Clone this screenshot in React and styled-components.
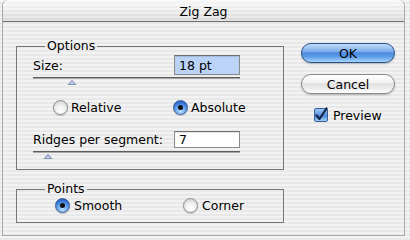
import React from "react";
import styled, { createGlobalStyle } from "styled-components";

const GlobalStyle = createGlobalStyle`
  html, body {
    margin: 0;
    padding: 0;
    background: repeating-linear-gradient(to bottom, #f3f3f3 0 2px, #e9e9e9 2px 4px);
  }
  body {
    font-family: "DejaVu Sans", "Liberation Sans", sans-serif;
    font-size: 12.5px;
    color: #000;
  }
`;

const stripes = "repeating-linear-gradient(to bottom, #f2f2f2 0 2px, #e8e8e8 2px 4px)";

const Window = styled.div`
  box-sizing: border-box;
  width: 403px;
  height: 236px;
  margin-left: 2px;
  border: 1px solid #a8a8a8;
  border-top: none;
  border-radius: 6px 6px 0 0;
  background: ${stripes};
  overflow: hidden;
`;

const TitleBar = styled.div`
  box-sizing: border-box;
  height: 22px;
  display: flex;
  align-items: center;
  justify-content: center;
  border-bottom: 1px solid #6c6c6c;
  background:
    linear-gradient(to bottom, rgba(255, 255, 255, 0.75), rgba(255, 255, 255, 0.1) 60%, rgba(0, 0, 0, 0.04)),
    repeating-linear-gradient(to bottom, #eeeeee 0 2px, #e2e2e2 2px 4px);
  border-radius: 6px 6px 0 0;
  padding-top: 1px;
`;

const Body = styled.div`
  display: flex;
  padding: 16px 0 0 13px;
`;

const LeftColumn = styled.div`
  width: 268px;
  display: flex;
  flex-direction: column;
  gap: 11px;
`;

const RightColumn = styled.div`
  width: 94px;
  margin-left: 17px;
  padding-top: 5px;
  display: flex;
  flex-direction: column;
  gap: 11px;
`;

const Group = styled.fieldset`
  margin: 0;
  min-width: 0;
  border: 1px solid #767676;
  padding: 0 43px ${(p) => p.$bottom}px 16px;
`;

const Legend = styled.legend`
  padding: 0 2px;
  margin-left: 12px;
  line-height: 16px;
  height: 16px;
`;

const FieldRow = styled.div`
  display: flex;
  align-items: center;
  height: ${(p) => p.$h}px;
  margin-top: ${(p) => p.$mt}px;
`;

const FieldLabel = styled.span`
  flex: 1;
`;

const TextInput = styled.div`
  box-sizing: border-box;
  width: 66px;
  height: 100%;
  display: flex;
  align-items: center;
  padding-left: 4px;
  border: 1px solid #8a8a8a;
  border-top-color: #6e6e6e;
  background: ${(p) => (p.$selected ? "#bbd3f6" : "#ffffff")};
  box-shadow: inset 0 1px 1px rgba(0, 0, 0, 0.12);
`;

const SliderTrack = styled.div`
  margin-top: ${(p) => p.$mt}px;
  height: 8px;
  display: flex;
  flex-direction: column;
`;

const SliderLine = styled.div`
  height: 1px;
  background: #5c5c5c;
  border-bottom: 1px solid #a6a6a6;
`;

const SliderThumb = styled.svg`
  display: block;
  margin-top: 1px;
  margin-left: ${(p) => p.$left}px;
`;

const RadioRow = styled.div`
  display: grid;
  grid-template-columns: ${(p) => p.$first}px auto;
  align-items: center;
  height: ${(p) => p.$h}px;
  margin-top: ${(p) => p.$mt}px;
  padding-left: ${(p) => p.$pl}px;
`;

const RadioItem = styled.label`
  display: flex;
  align-items: center;
  gap: ${(p) => p.$gap}px;
`;

const RadioDot = styled.span`
  box-sizing: border-box;
  width: 15px;
  height: 15px;
  border-radius: 50%;
  display: flex;
  align-items: center;
  justify-content: center;
  border: 1px solid ${(p) => (p.$on ? "#3a5d98" : "#8c8c8c")};
  background: ${(p) =>
    p.$on
      ? "radial-gradient(circle at 50% 80%, #b9e0ff 0%, #6aa8ee 40%, #2e6bd0 75%, #1f4fa5 100%)"
      : "radial-gradient(circle at 50% 75%, #ffffff 0%, #f1f1f1 45%, #cfcfcf 90%, #bdbdbd 100%)"};
  box-shadow: 0 1px 1px rgba(0, 0, 0, 0.2);
  &::after {
    content: "";
    display: ${(p) => (p.$on ? "block" : "none")};
    width: 5px;
    height: 5px;
    border-radius: 50%;
    background: #111;
  }
`;

const PushButton = styled.button`
  box-sizing: border-box;
  width: 94px;
  height: 20px;
  border-radius: 10px;
  font-family: inherit;
  font-size: 12.5px;
  color: #000;
  padding: 0;
  border: 1px solid ${(p) => (p.$default ? "#29508f" : "#8a8a8a")};
  background: ${(p) =>
    p.$default
      ? "linear-gradient(to bottom, #c3dcf8 0%, #80b0ec 40%, #4d8ae0 50%, #5c9be9 70%, #a8d6fb 100%)"
      : "linear-gradient(to bottom, #ffffff 0%, #f3f3f3 40%, #e0e0e0 50%, #ececec 75%, #ffffff 100%)"};
  box-shadow: 0 1px 2px rgba(0, 0, 0, 0.25);
`;

const CheckRow = styled.label`
  display: flex;
  align-items: center;
  gap: 5px;
  margin-top: 2px;
  padding-left: 13px;
  height: 16px;
`;

const CheckBox = styled.span`
  box-sizing: border-box;
  width: 14px;
  height: 14px;
  border: 1px solid #395d96;
  border-radius: 2px;
  background: linear-gradient(to bottom, #9cc6f5 0%, #5b95e3 50%, #4a86da 55%, #a3d2fb 100%);
  display: flex;
  align-items: center;
  justify-content: center;
  overflow: visible;
`;

function Radio({ on, label, gap = 3 }) {
  return (
    <RadioItem $gap={gap}>
      <RadioDot $on={on} />
      <span>{label}</span>
    </RadioItem>
  );
}

function Slider({ mt, left }) {
  return (
    <SliderTrack $mt={mt}>
      <SliderLine />
      <SliderThumb $left={left} width="10" height="6" viewBox="0 0 10 6">
        <polygon points="5,0.5 9.5,5.5 0.5,5.5" fill="#b9c9e8" stroke="#6b7ba3" strokeWidth="1" />
      </SliderThumb>
    </SliderTrack>
  );
}

export default function App() {
  return (
    <>
      <GlobalStyle />
      <Window>
        <TitleBar>Zig Zag</TitleBar>
        <Body>
          <LeftColumn>
            <Group $bottom={10}>
              <Legend>Options</Legend>
              <FieldRow $h={20} $mt={1}>
                <FieldLabel>Size:</FieldLabel>
                <TextInput $selected>18 pt</TextInput>
              </FieldRow>
              <Slider mt={2} left={34} />
              <RadioRow $h={15} $mt={15} $pl={20} $first={120}>
                <Radio label="Relative" />
                <Radio on label="Absolute" />
              </RadioRow>
              <FieldRow $h={17} $mt={16}>
                <FieldLabel>Ridges per segment:</FieldLabel>
                <TextInput>7</TextInput>
              </FieldRow>
              <Slider mt={3} left={10} />
            </Group>
            <Group $bottom={10}>
              <Legend>Points</Legend>
              <RadioRow $h={14} $mt={1} $pl={22} $first={128}>
                <Radio on label="Smooth" gap={4} />
                <Radio label="Corner" gap={4} />
              </RadioRow>
            </Group>
          </LeftColumn>
          <RightColumn>
            <PushButton $default>OK</PushButton>
            <PushButton>Cancel</PushButton>
            <CheckRow>
              <CheckBox>
                <svg width="14" height="14" viewBox="0 0 14 14" style={{ overflow: "visible" }}>
                  <path d="M2.5 7.5 L5.5 11 L12.5 0.5" fill="none" stroke="#142446" strokeWidth="2.2" strokeLinecap="round" strokeLinejoin="round" />
                </svg>
              </CheckBox>
              <span>Preview</span>
            </CheckRow>
          </RightColumn>
        </Body>
      </Window>
    </>
  );
}
